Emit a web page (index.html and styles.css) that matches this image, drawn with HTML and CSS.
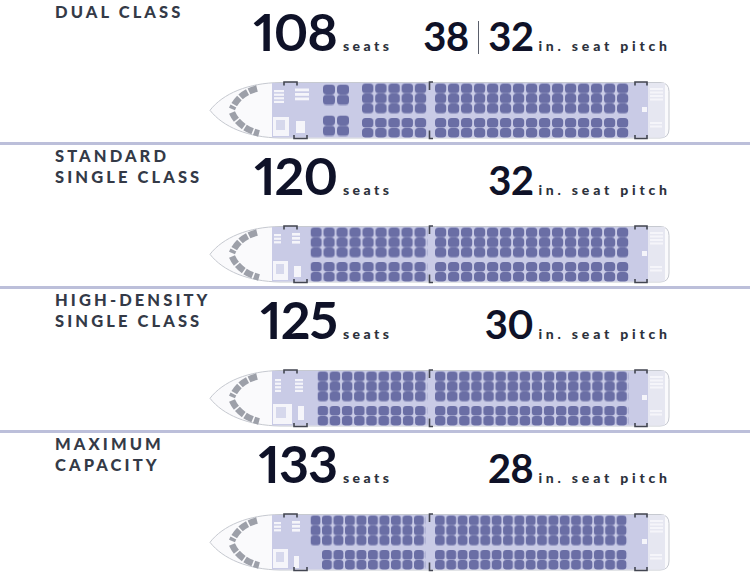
FILE: index.html
```html
<!DOCTYPE html>
<html lang="en">
<head>
<meta charset="utf-8">
<title>A220-100 cabin configurations</title>
<link rel="stylesheet" href="styles.css">
</head>
<body>
<div class="page">

  <section class="cfg">
    <div class="head">
      <h2 class="title">DUAL CLASS</h2>
      <div class="stats">
        <div class="seats"><span class="num">108</span><span class="unit">seats</span></div>
        <div class="pitch"><span class="pnum">38</span><span class="divider"></span><span class="pnum">32</span><span class="unit">in. seat pitch</span></div>
      </div>
    </div>
    <svg class="plane" viewBox="0 0 464 64" width="464" height="64">
      <defs>
        <pattern id="fa" patternUnits="userSpaceOnUse" width="14" height="21"><rect x="0" y="0" width="12" height="10" rx="3.5"/><rect x="0" y="10.3" width="12" height="10" rx="3.5"/></pattern>
        <pattern id="ta" patternUnits="userSpaceOnUse" width="13.2" height="30"><rect width="11.4" height="9.7" rx="3.5"/><rect y="10" width="11.4" height="9.7" rx="3.5"/><rect y="20" width="11.4" height="9.7" rx="3.5"/></pattern>
        <pattern id="ba" patternUnits="userSpaceOnUse" width="13.2" height="20"><rect width="11.4" height="9.6" rx="3.5"/><rect y="9.9" width="11.4" height="9.6" rx="3.5"/></pattern>
        <pattern id="tb" patternUnits="userSpaceOnUse" width="13" height="30"><rect width="11.2" height="9.7" rx="3.5"/><rect y="10" width="11.2" height="9.7" rx="3.5"/><rect y="20" width="11.2" height="9.7" rx="3.5"/></pattern>
        <pattern id="bb" patternUnits="userSpaceOnUse" width="13" height="20"><rect width="11.2" height="9.6" rx="3.5"/><rect y="9.9" width="11.2" height="9.6" rx="3.5"/></pattern>
      </defs>
      <path class="hull" d="M72 4.5 L452 4.5 Q461 4.5 461 13.5 L461 51 Q461 60 452 60 L72 60 C40 59.5 15 49 2 32.3 C15 15.5 40 5 72 4.5Z"/>
      <rect class="body" x="64" y="5" width="376" height="54.5"/>
      <rect class="rear" x="440" y="5" width="17" height="54.5"/>
      <g class="white">
        <rect x="66" y="12" width="10" height="2.2"/><rect x="66" y="15.6" width="10" height="2.2"/><rect x="66" y="19.2" width="10" height="2.2"/><rect x="66" y="22.8" width="10" height="2.2"/>
        <rect x="87" y="10.5" width="14" height="2.8"/><rect x="87" y="15" width="14" height="2.8"/><rect x="87" y="19.5" width="14" height="2.8"/>
        <rect x="65" y="39" width="16" height="19"/><rect x="88" y="43" width="9" height="12"/>
        <rect x="442" y="10" width="13" height="2"/><rect x="442" y="13.5" width="13" height="2"/><rect x="442" y="17" width="13" height="2"/><rect x="442" y="20.5" width="13" height="2"/>
        <rect x="442" y="44" width="12" height="2"/><rect x="442" y="47.5" width="12" height="2"/>
        <rect x="434" y="29" width="5" height="5"/>
      </g>
      <rect class="inner" x="68" y="42" width="9" height="10"/>
      <path class="cockpit" d="M49 10.5 Q31 15 24 31 M24 34.5 Q31 50 51 55.5"/>
      <g class="seat">
        <rect transform="translate(115 6.5)" width="28" height="21" fill="url(#fa)"/>
        <rect transform="translate(115 37.5)" width="28" height="21" fill="url(#fa)"/>
        <rect transform="translate(154 5.5)" width="66" height="30" fill="url(#ta)"/>
        <rect transform="translate(154 40)" width="66" height="20" fill="url(#ba)"/>
        <rect transform="translate(227 5.5)" width="195" height="30" fill="url(#tb)"/>
        <rect transform="translate(227 40)" width="195" height="20" fill="url(#bb)"/>
      </g>
      <path class="door" d="M76 7.5 V4 H89 V7.5 M86 57 V60.5 H99 V57 M225 4 H221.5 V12 M225 60.5 H221.5 V52.5 M427 7.5 V4 H439 V7.5 M427 57 V60.5 H439 V57"/>
    </svg>
  </section>

  <section class="cfg">
    <div class="head">
      <h2 class="title">STANDARD<br>SINGLE CLASS</h2>
      <div class="stats">
        <div class="seats"><span class="num">120</span><span class="unit">seats</span></div>
        <div class="pitch"><span class="pnum">32</span><span class="unit">in. seat pitch</span></div>
      </div>
    </div>
    <svg class="plane" viewBox="0 0 464 64" width="464" height="64">
      <defs>
        <pattern id="tc" patternUnits="userSpaceOnUse" width="13" height="30"><rect width="11.2" height="9.7" rx="3.5"/><rect y="10" width="11.2" height="9.7" rx="3.5"/><rect y="20" width="11.2" height="9.7" rx="3.5"/></pattern>
        <pattern id="bc" patternUnits="userSpaceOnUse" width="13" height="20"><rect width="11.2" height="9.6" rx="3.5"/><rect y="9.9" width="11.2" height="9.6" rx="3.5"/></pattern>
      </defs>
      <path class="hull" d="M72 4.5 L452 4.5 Q461 4.5 461 13.5 L461 51 Q461 60 452 60 L72 60 C40 59.5 15 49 2 32.3 C15 15.5 40 5 72 4.5Z"/>
      <rect class="body" x="64" y="5" width="376" height="54.5"/>
      <rect class="rear" x="440" y="5" width="17" height="54.5"/>
      <g class="white">
        <rect x="66" y="12" width="7" height="2.2"/><rect x="66" y="15.6" width="7" height="2.2"/><rect x="66" y="19.2" width="7" height="2.2"/>
        <rect x="84" y="11" width="8" height="2.6"/><rect x="84" y="15" width="8" height="2.6"/><rect x="84" y="19" width="8" height="2.6"/>
        <rect x="65" y="39" width="15" height="19"/><rect x="86" y="44" width="7" height="11"/>
        <rect x="442" y="10" width="13" height="2"/><rect x="442" y="13.5" width="13" height="2"/><rect x="442" y="17" width="13" height="2"/><rect x="442" y="20.5" width="13" height="2"/>
        <rect x="442" y="44" width="12" height="2"/><rect x="442" y="47.5" width="12" height="2"/>
        <rect x="434" y="29" width="5" height="5"/>
      </g>
      <rect class="inner" x="68" y="42" width="8" height="10"/>
      <path class="cockpit" d="M49 10.5 Q31 15 24 31 M24 34.5 Q31 50 51 55.5"/>
      <g class="seat">
        <rect transform="translate(102.5 5.5)" width="117" height="30" fill="url(#tc)"/>
        <rect transform="translate(102.5 40)" width="117" height="20" fill="url(#bc)"/>
        <rect transform="translate(227 5.5)" width="195" height="30" fill="url(#tc)"/>
        <rect transform="translate(227 40)" width="195" height="20" fill="url(#bc)"/>
      </g>
      <path class="door" d="M76 7.5 V4 H89 V7.5 M86 57 V60.5 H99 V57 M225 4 H221.5 V12 M225 60.5 H221.5 V52.5 M427 7.5 V4 H439 V7.5 M427 57 V60.5 H439 V57"/>
    </svg>
  </section>

  <section class="cfg">
    <div class="head">
      <h2 class="title">HIGH-DENSITY<br>SINGLE CLASS</h2>
      <div class="stats">
        <div class="seats"><span class="num">125</span><span class="unit">seats</span></div>
        <div class="pitch"><span class="pnum">30</span><span class="unit">in. seat pitch</span></div>
      </div>
    </div>
    <svg class="plane" viewBox="0 0 464 64" width="464" height="64">
      <defs>
        <pattern id="td" patternUnits="userSpaceOnUse" width="12.2" height="30"><rect width="10.5" height="9.7" rx="3.3"/><rect y="10" width="10.5" height="9.7" rx="3.3"/><rect y="20" width="10.5" height="9.7" rx="3.3"/></pattern>
        <pattern id="bd" patternUnits="userSpaceOnUse" width="12.2" height="20"><rect width="10.5" height="9.6" rx="3.3"/><rect y="9.9" width="10.5" height="9.6" rx="3.3"/></pattern>
        <pattern id="te" patternUnits="userSpaceOnUse" width="12.1" height="30"><rect width="10.4" height="9.7" rx="3.3"/><rect y="10" width="10.4" height="9.7" rx="3.3"/><rect y="20" width="10.4" height="9.7" rx="3.3"/></pattern>
        <pattern id="be" patternUnits="userSpaceOnUse" width="12.1" height="20"><rect width="10.4" height="9.6" rx="3.3"/><rect y="9.9" width="10.4" height="9.6" rx="3.3"/></pattern>
      </defs>
      <path class="hull" d="M72 4.5 L452 4.5 Q461 4.5 461 13.5 L461 51 Q461 60 452 60 L72 60 C40 59.5 15 49 2 32.3 C15 15.5 40 5 72 4.5Z"/>
      <rect class="body" x="64" y="5" width="376" height="54.5"/>
      <rect class="rear" x="440" y="5" width="17" height="54.5"/>
      <g class="white">
        <rect x="67" y="13" width="6" height="2.2"/><rect x="67" y="16.6" width="6" height="2.2"/><rect x="67" y="20.2" width="6" height="2.2"/><rect x="67" y="23.8" width="6" height="2.2"/>
        <rect x="87" y="13" width="8" height="2.2"/><rect x="87" y="16.6" width="8" height="2.2"/><rect x="87" y="20.2" width="8" height="2.2"/><rect x="87" y="23.8" width="8" height="2.2"/>
        <rect x="65" y="38" width="19" height="20"/><rect x="90" y="40" width="6" height="14"/>
        <rect x="442" y="10" width="13" height="2"/><rect x="442" y="13.5" width="13" height="2"/><rect x="442" y="17" width="13" height="2"/><rect x="442" y="20.5" width="13" height="2"/>
        <rect x="442" y="44" width="12" height="2"/><rect x="442" y="47.5" width="12" height="2"/>
        <rect x="434" y="29" width="5" height="5"/>
      </g>
      <rect class="inner" x="68" y="41" width="10" height="11"/>
      <path class="cockpit" d="M49 10.5 Q31 15 24 31 M24 34.5 Q31 50 51 55.5"/>
      <g class="seat">
        <rect transform="translate(109.5 5.5)" width="109.8" height="30" fill="url(#td)"/>
        <rect transform="translate(109.5 40)" width="109.8" height="20" fill="url(#bd)"/>
        <rect transform="translate(227 5.5)" width="193.6" height="30" fill="url(#te)"/>
        <rect transform="translate(227 40)" width="193.6" height="20" fill="url(#be)"/>
      </g>
      <path class="door" d="M76 7.5 V4 H89 V7.5 M86 57 V60.5 H99 V57 M225 4 H221.5 V12 M225 60.5 H221.5 V52.5 M427 7.5 V4 H439 V7.5 M427 57 V60.5 H439 V57"/>
    </svg>
  </section>

  <section class="cfg">
    <div class="head">
      <h2 class="title">MAXIMUM<br>CAPACITY</h2>
      <div class="stats">
        <div class="seats"><span class="num">133</span><span class="unit">seats</span></div>
        <div class="pitch"><span class="pnum">28</span><span class="unit">in. seat pitch</span></div>
      </div>
    </div>
    <svg class="plane" viewBox="0 0 464 64" width="464" height="64">
      <defs>
        <pattern id="tf" patternUnits="userSpaceOnUse" width="11.5" height="30"><rect width="9.9" height="9.7" rx="3.2"/><rect y="10" width="9.9" height="9.7" rx="3.2"/><rect y="20" width="9.9" height="9.7" rx="3.2"/></pattern>
        <pattern id="bf" patternUnits="userSpaceOnUse" width="11.5" height="20"><rect width="9.9" height="9.6" rx="3.2"/><rect y="9.9" width="9.9" height="9.6" rx="3.2"/></pattern>
        <pattern id="tg" patternUnits="userSpaceOnUse" width="11.35" height="30"><rect width="9.8" height="9.7" rx="3.2"/><rect y="10" width="9.8" height="9.7" rx="3.2"/><rect y="20" width="9.8" height="9.7" rx="3.2"/></pattern>
        <pattern id="bg" patternUnits="userSpaceOnUse" width="11.35" height="20"><rect width="9.8" height="9.6" rx="3.2"/><rect y="9.9" width="9.8" height="9.6" rx="3.2"/></pattern>
      </defs>
      <path class="hull" d="M72 4.5 L452 4.5 Q461 4.5 461 13.5 L461 51 Q461 60 452 60 L72 60 C40 59.5 15 49 2 32.3 C15 15.5 40 5 72 4.5Z"/>
      <rect class="body" x="64" y="5" width="376" height="54.5"/>
      <rect class="rear" x="440" y="5" width="17" height="54.5"/>
      <g class="white">
        <rect x="66" y="12" width="7" height="2.2"/><rect x="66" y="15.6" width="7" height="2.2"/><rect x="66" y="19.2" width="7" height="2.2"/>
        <rect x="84" y="11" width="8" height="2.6"/><rect x="84" y="15" width="8" height="2.6"/><rect x="84" y="19" width="8" height="2.6"/>
        <rect x="65" y="39" width="15" height="19"/><rect x="86" y="46" width="5" height="12"/>
        <rect x="442" y="10" width="13" height="2"/><rect x="442" y="13.5" width="13" height="2"/><rect x="442" y="17" width="13" height="2"/><rect x="442" y="20.5" width="13" height="2"/>
        <rect x="442" y="44" width="12" height="2"/><rect x="442" y="47.5" width="12" height="2"/>
        <rect x="434" y="29" width="5" height="5"/>
      </g>
      <rect class="inner" x="68" y="42" width="8" height="10"/>
      <path class="cockpit" d="M49 10.5 Q31 15 24 31 M24 34.5 Q31 50 51 55.5"/>
      <g class="seat">
        <rect transform="translate(102.5 5.5)" width="115" height="30" fill="url(#tf)"/>
        <rect transform="translate(114 40)" width="103.5" height="20" fill="url(#bf)"/>
        <rect transform="translate(227 5.5)" width="192.95" height="30" fill="url(#tg)"/>
        <rect transform="translate(227 40)" width="192.95" height="20" fill="url(#bg)"/>
      </g>
      <path class="door" d="M76 7.5 V4 H89 V7.5 M86 57 V60.5 H99 V57 M225 4 H221.5 V12 M225 60.5 H221.5 V52.5 M427 7.5 V4 H439 V7.5 M427 57 V60.5 H439 V57"/>
    </svg>
  </section>

</div>
</body>
</html>
```

FILE: styles.css
```css
html, body {
  margin: 0;
  padding: 0;
  background: #ffffff;
}

body {
  font-family: "Lato", "Liberation Sans", sans-serif;
  width: 750px;
  height: 574px;
  overflow: hidden;
}

.page {
  padding-top: 1px;
}

.cfg {
  height: 144px;
  box-sizing: border-box;
  border-bottom: 3px solid #bcbfda;
}

.head {
  display: flex;
  align-items: flex-start;
  height: 56px;
  box-sizing: border-box;
  padding: 1px 83px 0 55px;
}

.title {
  margin: 0;
  width: 198px;
  flex: none;
  font-size: 16.5px;
  line-height: 20.5px;
  font-weight: 900;
  letter-spacing: 3.1px;
  color: #343a47;
}

.stats {
  flex: 1;
  display: flex;
  align-items: baseline;
  margin-top: 3px;
}

.seats {
  white-space: nowrap;
}

.num {
  display: inline-block;
  width: 84px;
  text-align: right;
  font-size: 52px;
  line-height: 52px;
  font-weight: 700;
  letter-spacing: -1px;
  color: #0f1228;
  font-variant-numeric: proportional-nums;
}

.unit {
  font-size: 14px;
  font-weight: 900;
  letter-spacing: 3.4px;
  color: #2d323d;
  margin-left: 6px;
}

.pitch {
  margin-left: auto;
  white-space: nowrap;
}

.pitch .unit {
  letter-spacing: 3.8px;
  margin-left: 5px;
  margin-right: -3.8px;
}

.pnum {
  font-size: 40px;
  line-height: 40px;
  font-weight: 700;
  letter-spacing: -0.5px;
  color: #0f1228;
  font-variant-numeric: proportional-nums;
}

.divider {
  display: inline-block;
  width: 1.5px;
  height: 33px;
  background: #5a5f6b;
  vertical-align: -3px;
  margin: 0 9px 0 9px;
}

.plane {
  display: block;
  margin: 21px 0 0 208px;
}

.hull {
  fill: #fafafc;
  stroke: #c6c9d0;
  stroke-width: 1;
}

.body {
  fill: #c9cbe6;
}

.rear {
  fill: #e6e7f1;
}

.white rect {
  fill: #f5f5fa;
}

.inner {
  fill: #d6d8ec;
}

.cockpit {
  fill: none;
  stroke: #9da0a9;
  stroke-width: 6.5;
  stroke-dasharray: 8.5 1.6;
}

.plane pattern rect {
  fill: #6a6ea5;
}

.door {
  fill: none;
  stroke: #434652;
  stroke-width: 1.6;
}
```
